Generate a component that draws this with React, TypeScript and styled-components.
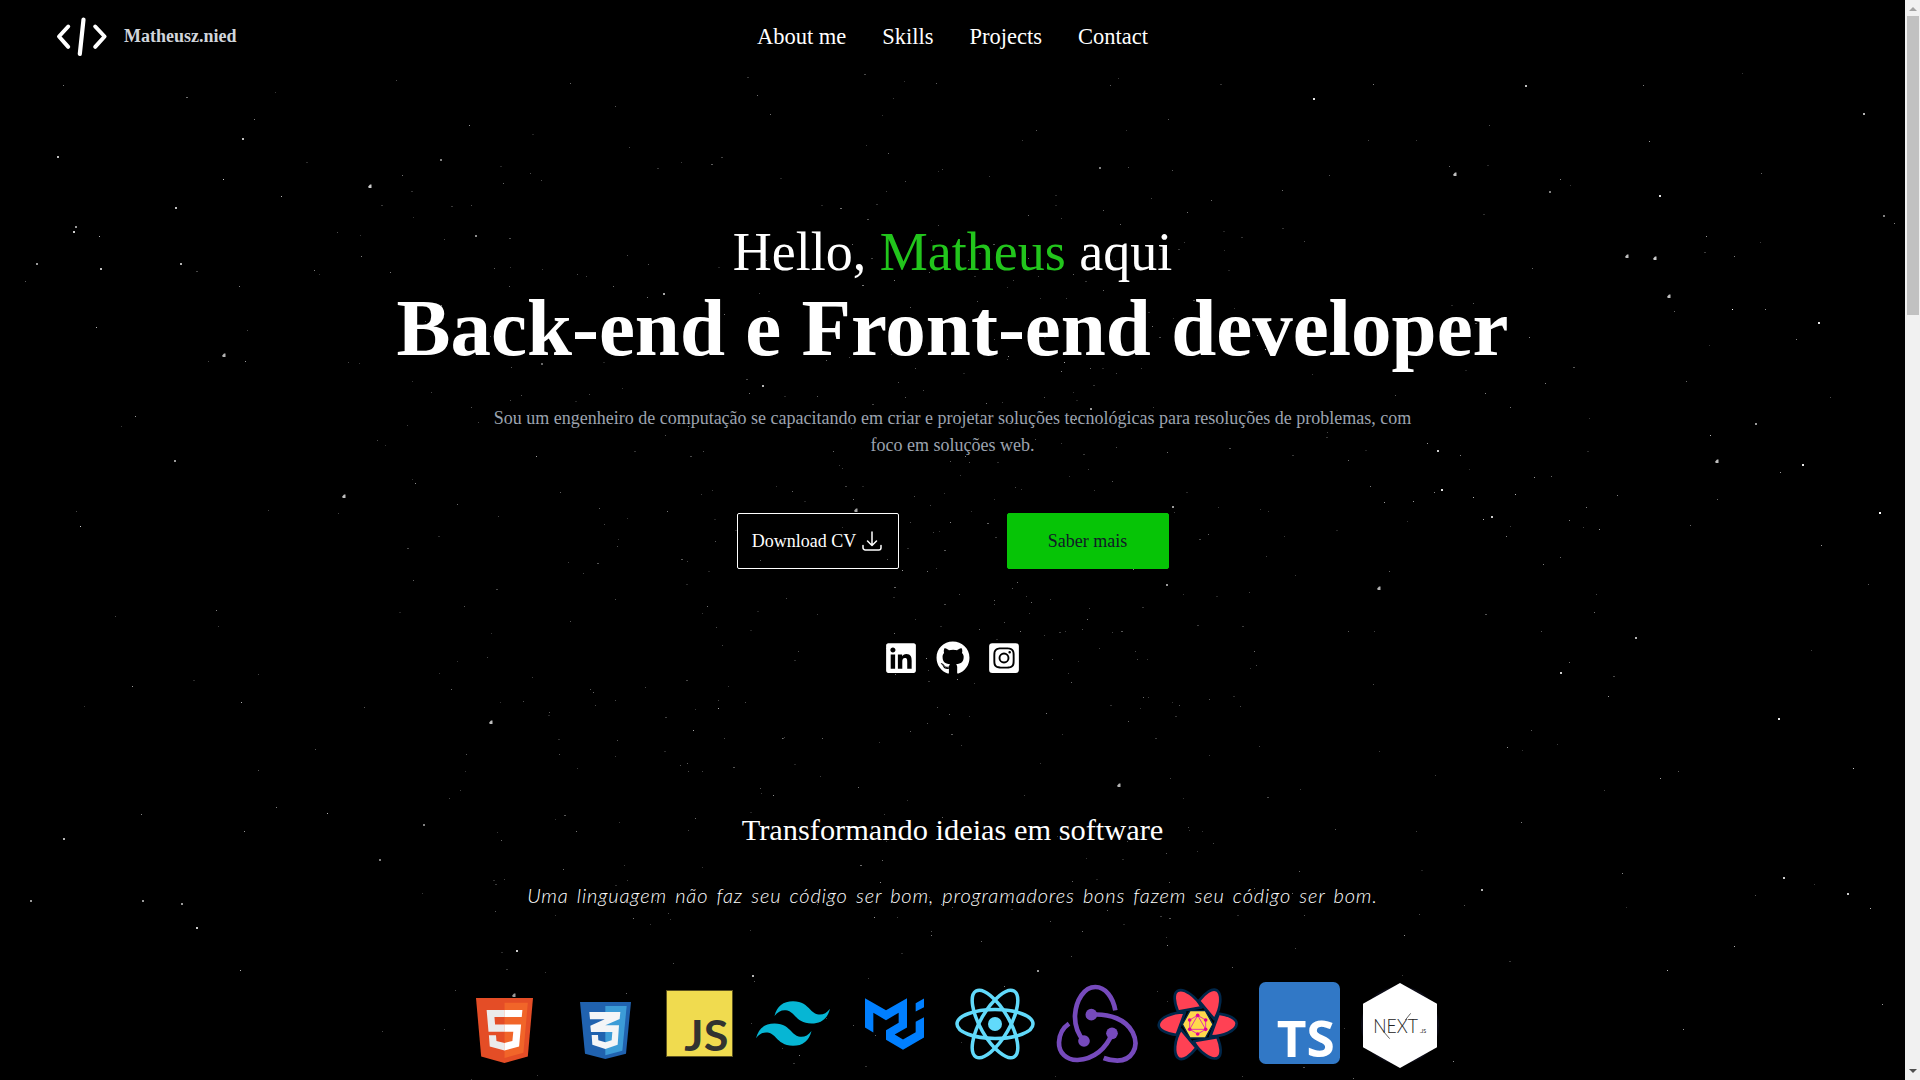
import React from "react";
import styled, { createGlobalStyle } from "styled-components";
import { FaGithub, FaInstagramSquare, FaLinkedin } from "react-icons/fa";

const GlobalStyle = createGlobalStyle`
  *, *::before, *::after { box-sizing: border-box; }
  html { font-size: 18px; }
  body {
    margin: 0;
    background: #000;
    color: #fff;
    font-family: "Liberation Serif", "Times New Roman", serif;
    overflow: hidden;
  }
  h1, h2, p { margin: 0; }
  a { color: inherit; text-decoration: none; }
`;

const Page = styled.div`
  display: flex;
  height: 1080px;
  background: #000;
`;

const Content = styled.div`
  position: relative;
  flex: 1;
  min-width: 0;
  display: flex;
  flex-direction: column;
  overflow: hidden;
`;

const Sky = styled.svg`
  position: absolute;
  inset: 0;
  width: 100%;
  height: 100%;
`;

const Header = styled.header`
  position: relative;
  display: grid;
  grid-template-columns: 1fr auto 1fr;
  align-items: center;
  height: 73px;
  padding: 0 56px;
  background: #000;
`;

const Brand = styled.a`
  display: flex;
  align-items: center;
  gap: 16px;
  color: #d1d5db;
  font-size: 18px;
  font-weight: 700;
`;

const Nav = styled.nav`
  display: flex;
  gap: 36px;
  font-size: 22.5px;
  line-height: 34px;
`;

const Hero = styled.main`
  position: relative;
  flex: 1;
  display: flex;
  flex-direction: column;
  align-items: center;
  text-align: center;
`;

const Greeting = styled.p`
  margin-top: 152px;
  font-size: 54px;
  line-height: 54px;
`;

const Accent = styled.span`
  color: #22c51c;
`;

const Headline = styled.h1`
  font-size: 81px;
  line-height: 81px;
  margin-top: 9px;
  font-weight: 700;
  white-space: nowrap;
`;

const Summary = styled.p`
  width: 936px;
  margin-top: 36px;
  color: #9ca3af;
  font-size: 18px;
  line-height: 27px;
`;

const Actions = styled.div`
  display: flex;
  gap: 108px;
  margin-top: 54px;
`;

const Button = styled.a<{ $solid?: boolean }>`
  display: flex;
  align-items: center;
  justify-content: center;
  gap: 4px;
  width: 162px;
  height: 56px;
  padding-left: ${(p) => (p.$solid ? "0" : "1px")};
  border: 1px solid ${(p) => (p.$solid ? "#06c406" : "#fff")};
  border-radius: 2px;
  background: ${(p) => (p.$solid ? "#06c406" : "transparent")};
  color: ${(p) => (p.$solid ? "#111827" : "#fff")};
  font-size: 18px;
`;

const Socials = styled.div`
  display: flex;
  gap: 17.5px;
  margin-top: 72px;
  font-size: 34px;
  line-height: 0;
`;

const Tagline = styled.h2`
  margin-top: 137px;
  font-size: 30.4px;
  line-height: 36px;
  font-weight: 400;
`;

const Quote = styled.p`
  margin-top: 32px;
  font-family: "Lato", "Liberation Sans", sans-serif;
  font-weight: 300;
  font-style: italic;
  font-size: 20px;
  line-height: 30px;
  letter-spacing: 0.87px;
  word-spacing: 2.3px;
  white-space: nowrap;
  color: #fff;
`;

const Stack = styled.div`
  display: flex;
  align-items: flex-start;
  margin-top: 72px;
  padding-left: 7px;
`;

const Logo = styled.svg<{ $w: number; $h: number; $gap: number; $drop: number }>`
  flex: none;
  width: ${(p) => p.$w}px;
  height: ${(p) => p.$h}px;
  margin-left: ${(p) => p.$gap}px;
  margin-top: ${(p) => p.$drop}px;
  overflow: visible;
`;

const ScrollTrack = styled.div`
  display: flex;
  flex-direction: column;
  align-items: center;
  width: 15px;
  height: 100%;
  padding: 7px 0;
  background: #f1f1f1;
`;

const ScrollThumb = styled.div`
  width: 12px;
  height: 299px;
  margin: 5px 0 auto 1px;
  background: #c1c1c1;
`;

// x, y, size, brightness
type Star = [number, number, number, number];

const nearStars: Star[] = [
  [255, 120, 1, 0.5], [243, 139, 2, 0.75], [58, 157, 2, 0.75], [224, 180, 1, 0.8], [282, 197, 1, 0.7],
  [176, 208, 2, 0.75], [76, 227, 2, 0.6], [74, 232, 2, 0.8], [100, 237, 1, 0.7], [37, 264, 2, 0.6],
  [101, 269, 2, 0.75], [181, 264, 2, 0.7], [240, 287, 1, 0.5], [97, 328, 1, 0.7], [224, 355, 3, 0.7],
  [370, 186, 3, 0.8], [441, 160, 2, 0.5], [470, 126, 1, 0.6], [571, 84, 1, 0.4], [504, 184, 1, 0.4],
  [531, 174, 1, 0.3], [542, 181, 1, 0.3], [472, 206, 1, 0.3], [476, 236, 2, 0.55], [338, 233, 1, 0.3],
  [362, 257, 1, 0.5], [628, 256, 1, 0.3], [578, 275, 1, 0.3], [246, 362, 1, 0.6],
  [1314, 99, 2, 0.9], [1374, 85, 1, 0.5], [1526, 86, 2, 0.75], [1644, 86, 1, 0.5], [1864, 114, 2, 0.7],
  [1650, 142, 1, 0.6], [1455, 174, 3, 0.75], [1550, 192, 2, 0.5], [1561, 180, 1, 0.5], [1660, 196, 2, 0.9],
  [1762, 174, 1, 0.4], [1884, 216, 2, 0.5], [1895, 224, 1, 0.5], [1707, 237, 1, 0.6], [1627, 256, 3, 0.75],
  [1655, 258, 3, 0.8], [1735, 257, 1, 0.5], [1533, 269, 1, 0.4], [1669, 296, 3, 0.75], [1675, 312, 1, 0.4],
  [1733, 310, 1, 1], [1819, 323, 2, 0.9], [1797, 340, 1, 0.5], [1530, 338, 1, 0.5], [1687, 382, 1, 0.4],
  [1546, 384, 1, 0.5], [1486, 394, 1, 0.5], [1756, 424, 2, 0.6], [1711, 436, 1, 0.7], [1717, 461, 3, 0.75],
  [1803, 465, 2, 0.9], [1781, 473, 1, 0.6], [1438, 451, 2, 0.8], [1428, 444, 1, 0.6], [1461, 456, 1, 0.5],
  [1442, 490, 2, 0.9], [1474, 498, 1, 0.7], [1516, 495, 1, 0.7], [1492, 517, 2, 0.8], [1484, 520, 1, 0.7],
  [1535, 478, 1, 0.6], [1552, 477, 1, 0.4], [1618, 496, 1, 0.5], [1587, 508, 1, 0.5], [1570, 521, 1, 0.5],
  [1600, 530, 1, 0.6], [1880, 513, 2, 1], [1718, 500, 1, 0.4], [1822, 546, 1, 0.6], [1691, 526, 1, 0.4],
  [1561, 558, 1, 0.4], [1414, 502, 1, 0.6], [1385, 503, 1, 0.6], [1379, 588, 3, 0.7], [1636, 638, 2, 0.7],
  [1561, 673, 2, 0.8], [1779, 719, 2, 0.9], [1848, 894, 2, 0.8], [1784, 878, 2, 0.8], [1854, 769, 1, 0.8],
  [1482, 890, 2, 0.7], [1119, 785, 3, 0.7], [491, 722, 3, 0.75], [344, 496, 3, 0.75], [175, 461, 2, 0.6],
  [81, 527, 1, 0.8], [136, 417, 1, 0.6], [217, 611, 1, 0.5], [133, 687, 1, 0.6], [64, 839, 2, 0.7],
  [31, 901, 2, 0.6], [143, 901, 2, 0.6], [182, 904, 2, 0.6], [197, 928, 2, 0.8], [241, 971, 1, 0.7],
  [328, 814, 1, 0.7], [277, 808, 1, 0.5], [380, 860, 2, 0.5], [517, 951, 2, 0.8], [424, 825, 2, 0.5],
  [1871, 909, 1, 0.7], [1735, 947, 1, 0.7], [1668, 971, 1, 0.7], [1684, 1030, 1, 0.6], [1883, 1005, 1, 0.6],
  [1522, 823, 1, 0.5], [1609, 697, 1, 0.6], [664, 294, 2, 0.65], [763, 386, 2, 0.7], [856, 510, 3, 0.65],
  [1091, 409, 2, 0.6], [1173, 507, 2, 0.6], [1167, 585, 2, 0.6], [1100, 168, 2, 0.5], [542, 364, 2, 0.4],
  [514, 995, 3, 0.6], [753, 976, 2, 0.7], [1038, 971, 2, 0.6],
];

// Faint stars thin out away from the centre of the sky.
function makeFarStars(count: number): Star[] {
  let seed = 20931;
  const next = () => {
    seed = (seed * 16807) % 2147483647;
    return seed / 2147483647;
  };
  const spread = () => (next() + next() + next() + next() - 2) * 1.73;
  const stars: Star[] = [];
  for (let i = 0; i < count; i += 1) {
    const x = Math.round(952 + spread() * 330);
    const y = Math.round(560 + spread() * 310);
    const level = 0.2 + next() * next() * 0.5;
    stars.push([x, y, next() > 0.75 ? 2 : 1, level]);
  }
  return stars;
}

const farStars = makeFarStars(720);

function StarField() {
  return (
    <Sky viewBox="0 0 1905 1080" preserveAspectRatio="none" aria-hidden="true">
      {farStars.map(([x, y, size, level], i) => (
        <rect key={i} x={x} y={y} width={size} height={1} fill="#fff" opacity={size > 1 ? level * 0.7 : level} />
      ))}
      {nearStars.map(([x, y, size, level], i) =>
        size > 2 ? (
          <path key={i} d={`M${x} ${y - 1.5}h1.5v3.4h-3v-1.6z`} fill="#fff" opacity={level} />
        ) : (
          <rect key={i} x={x - 1} y={y - 1} width={size} height={size} fill="#fff" opacity={level} />
        )
      )}
    </Sky>
  );
}

function TechStack() {
  return (
    <Stack>
      <Logo $w={57} $h={65} $gap={0} $drop={16} viewBox="30 0 451 512" preserveAspectRatio="none">
        <path fill="#e44d26" d="M71 460 30 0h451l-41 460-185 52z" />
        <path fill="#f16529" d="m256 472 149-41 35-394H256z" />
        <path fill="#ebebeb" d="M256 208h-75l-5-58h80V94H114l15 171h127zm0 147-64-17-4-45h-56l7 89 117 32z" />
        <path fill="#fff" d="M255 208v57h70l-7 73-63 17v59l116-32 16-174zm0-114v56h137l5-56z" />
      </Logo>
      <Logo $w={51} $h={57} $gap={47} $drop={19.5} viewBox="360 95 153 171">
        <path fill="#2062af" d="M360 95h153l-15 155-62 16-61-16z" />
        <path fill="#3c9cd7" d="M436 107h64l-13 134-51 14z" />
        <path
          fill="#f4f5f7"
          d="M388 125h93l-2 21-43 19h41l-4 58-37 13-39-13-2-29h19l1 16 21 6 19-6 2-25h-64l-2-19 43-19h-44z"
        />
      </Logo>
      <Logo $w={67} $h={67} $gap={35} $drop={8} viewBox="618 60 201 201">
        <rect x="618" y="60" width="201" height="201" fill="#5c5220" />
        <rect x="621" y="63" width="195" height="195" fill="#f0db4f" />
        <text
          x="673"
          y="242"
          fill="#323330"
          fontFamily="Lato, sans-serif"
          fontWeight="700"
          fontSize="124"
          textLength="132"
          lengthAdjust="spacingAndGlyphs"
        >
          JS
        </text>
      </Logo>
      <Logo $w={74} $h={45} $gap={23} $drop={18.5} viewBox="0 4.8 24 14.4">
        <path
          fill="#06b6d4"
          d="M12 4.8c-3.2 0-5.2 1.6-6 4.8 1.2-1.6 2.6-2.2 4.2-1.8.913.228 1.565.89 2.288 1.624C13.666 10.618 15.027 12 18 12c3.2 0 5.2-1.6 6-4.8-1.2 1.6-2.6 2.2-4.2 1.8-.913-.228-1.565-.89-2.288-1.624C16.337 6.182 14.976 4.8 12 4.8zM6 12c-3.2 0-5.2 1.6-6 4.8 1.2-1.6 2.6-2.2 4.2-1.8.913.228 1.565.89 2.288 1.624C7.666 17.818 9.027 19.2 12 19.2c3.2 0 5.2-1.6 6-4.8-1.2 1.6-2.6 2.2-4.2 1.8-.913-.228-1.565-.89-2.288-1.624C10.337 13.382 8.976 12 6 12z"
        />
      </Logo>
      <Logo $w={59} $h={52} $gap={35} $drop={16} viewBox="375 85 177 155">
        <path
          fill="#007fff"
          d="M375 85l63 36 63-36v88l-37 21 25 15 38-22v-31l25-14v61l-63 37-51-30v-29l38-22v-30l-38 22-38-22v59l-25-15zM527 100l25-14v26l-25 13z"
        />
      </Logo>
      <Logo $w={80} $h={70} $gap={31} $drop={7} viewBox="646 55 240 210">
        <g fill="none" stroke="#61dafb" strokeWidth="10.5">
          <ellipse cx="766" cy="160" rx="114" ry="43.5" />
          <ellipse cx="766" cy="160" rx="114" ry="43.5" transform="rotate(60 766 160)" />
          <ellipse cx="766" cy="160" rx="114" ry="43.5" transform="rotate(120 766 160)" />
        </g>
        <circle cx="766" cy="160" r="21" fill="#61dafb" />
      </Logo>
      <Logo $w={82} $h={79} $gap={21} $drop={1.5} viewBox="48 40 246 237">
        <g fill="none" stroke="#764abc" strokeWidth="14">
          <path d="M226 119C219 79 196 49 166 49c-33 0-58 38-61 85-1 32 9 57 27 77" />
          <path d="M153 132c58-4 105 15 125 53 23 46-5 85-46 85-16 0-29-3-41-8" />
          <path d="M216 188c-16 46-56 78-103 80-34 1-57-22-56-53 1-24 11-43 30-56" />
        </g>
        <g fill="#764abc">
          <circle cx="154" cy="132" r="17.5" />
          <circle cx="132" cy="211" r="17.5" />
          <circle cx="216" cy="188" r="17.5" />
        </g>
      </Logo>
      <Logo $w={81} $h={73} $gap={19} $drop={5.5} viewBox="352 52 243 219">
        <g fill="#ff4154" stroke="#00274a" strokeWidth="8" strokeLinejoin="round">
          {[0, 60, 120, 180, 240, 300].map((angle) => (
            <path
              key={angle}
              transform={`rotate(${angle} 474 161)`}
              d="M357 163c1-21 41-39 79-38l-25 68c-30-4-54-15-54-30z"
            />
          ))}
        </g>
        <path fill="#ffd94c" stroke="#00274a" strokeWidth="4" d="m428 161 23-41h46l23 41-23 41h-46z" />
        <g fill="none" stroke="#e535ab" strokeWidth="3">
          <path d="m474 134 24 14v28l-24 14-24-14v-28zM474 134l24 42h-48z" />
        </g>
        <g fill="#e10098">
          <circle cx="474" cy="134" r="5.5" />
          <circle cx="498" cy="148" r="5.5" />
          <circle cx="498" cy="176" r="5.5" />
          <circle cx="474" cy="190" r="5.5" />
          <circle cx="450" cy="176" r="5.5" />
          <circle cx="450" cy="148" r="5.5" />
        </g>
      </Logo>
      <Logo $w={81} $h={82} $gap={21} $drop={0} viewBox="657 36 243 246">
        <rect x="657" y="36" width="243" height="246" rx="20" fill="#3178c6" />
        <text
          x="710"
          y="261"
          fill="#fff"
          fontFamily="'Open Sans', sans-serif"
          fontWeight="700"
          fontSize="152"
          textLength="174"
          lengthAdjust="spacingAndGlyphs"
        >
          TS
        </text>
      </Logo>
      <Logo $w={74} $h={85} $gap={23} $drop={1} viewBox="969 39 222 255">
        <circle cx="1080" cy="166" r="117" fill="#0b0b16" />
        <path fill="#fff" d="m1080 39 111 62v131l-111 62-111-62V101z" />
        <text
          x="1000"
          y="188"
          fill="#222"
          fontFamily="Lato, sans-serif"
          fontWeight="300"
          fontSize="58"
          textLength="134"
          lengthAdjust="spacingAndGlyphs"
        >
          NEXT
        </text>
        <text x="1139" y="188" fill="#222" fontFamily="Lato, sans-serif" fontWeight="400" fontSize="16">
          .JS
        </text>
        <path stroke="#444" strokeWidth="2.5" d="m1030 184 19 22M1096 150l16-20" />
      </Logo>
    </Stack>
  );
}

export default function App() {
  return (
    <>
      <GlobalStyle />
      <Page>
        <Content>
          <StarField />
          <Header>
            <Brand href="#">
              <svg width="52" height="50" viewBox="0 0 52 50" fill="none" stroke="#fff" strokeLinecap="round" strokeLinejoin="round">
                <path d="M12.2 14.5 3 24.5l9.2 10.3M39.2 14.5 48.6 24.5l-9.4 10.3" strokeWidth="4" />
                <path d="M27.5 7.5 23.8 42" strokeWidth="4.2" />
              </svg>
              Matheusz.nied
            </Brand>
            <Nav>
              <a href="#about">About me</a>
              <a href="#skills">Skills</a>
              <a href="#projects">Projects</a>
              <a href="#contact">Contact</a>
            </Nav>
          </Header>
          <Hero>
            <Greeting>
              Hello, <Accent>Matheus</Accent> aqui
            </Greeting>
            <Headline>Back-end e Front-end developer</Headline>
            <Summary>
              Sou um engenheiro de computação se capacitando em criar e projetar soluções tecnológicas para resoluções de
              problemas, com foco em soluções web.
            </Summary>
            <Actions>
              <Button href="#cv">
                Download CV
                <svg width="24" height="24" viewBox="0 0 24 24" fill="none" stroke="currentColor" strokeWidth="1.5" strokeLinecap="round" strokeLinejoin="round">
                  <path d="M3 16.5v2.25A2.25 2.25 0 0 0 5.25 21h13.5A2.25 2.25 0 0 0 21 18.75V16.5M16.5 12 12 16.5m0 0L7.5 12m4.5 4.5V3" />
                </svg>
              </Button>
              <Button href="#about" $solid>
                Saber mais
              </Button>
            </Actions>
            <Socials>
              <FaLinkedin />
              <FaGithub />
              <FaInstagramSquare />
            </Socials>
            <Tagline>Transformando ideias em software</Tagline>
            <Quote>Uma linguagem não faz seu código ser bom, programadores bons fazem seu código ser bom.</Quote>
            <TechStack />
          </Hero>
        </Content>
        <ScrollTrack>
          <svg width="8" height="4" viewBox="0 0 8 4">
            <path d="M4 0 8 4H0z" fill="#a3a3a3" />
          </svg>
          <ScrollThumb />
          <svg width="8" height="4" viewBox="0 0 8 4">
            <path d="M0 0h8L4 4z" fill="#505050" />
          </svg>
        </ScrollTrack>
      </Page>
    </>
  );
}
